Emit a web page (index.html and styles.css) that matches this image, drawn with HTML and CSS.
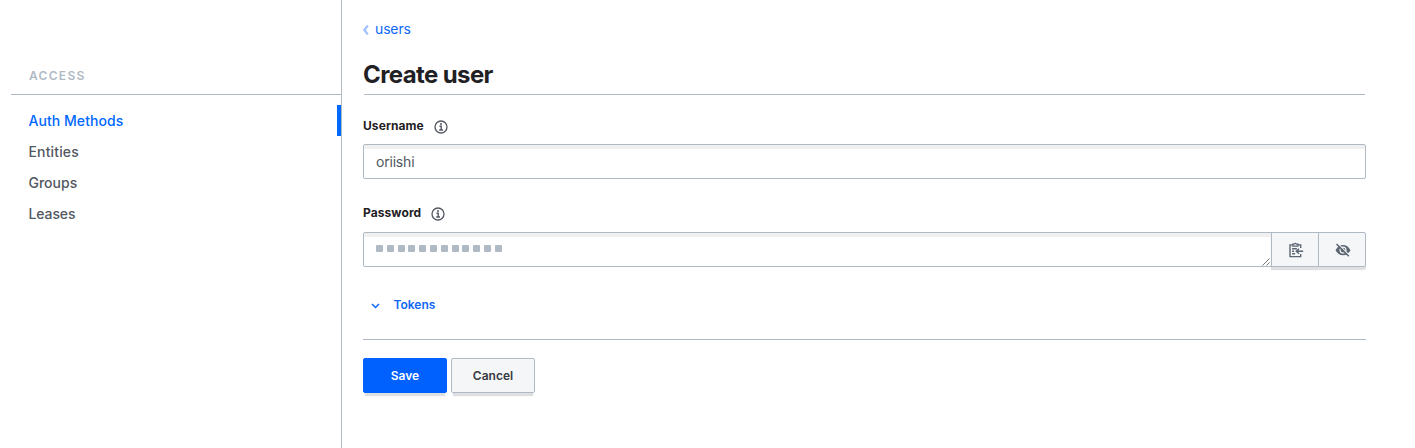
FILE: index.html
```html
<!DOCTYPE html>
<html lang="en">
<head>
<meta charset="utf-8">
<title>Create user</title>
<link rel="stylesheet" href="styles.css">
</head>
<body>
<div class="app">
  <aside class="sidebar">
    <h2 class="menu-label">ACCESS</h2>
    <nav class="menu">
      <a class="menu-item active">Auth Methods</a>
      <a class="menu-item entities">Entities</a>
      <a class="menu-item">Groups</a>
      <a class="menu-item leases">Leases</a>
    </nav>
  </aside>
  <main class="main">
    <a class="crumb"><svg width="7" height="10" viewBox="0 0 7 10"><path d="M5.8 0.6 L2.4 5 L5.8 9.4" fill="none" stroke="#a5c4ff" stroke-width="2.4"/></svg><span>users</span></a>
    <h1 class="title"><span>Create user</span></h1>
    <div class="label"><span>Username</span>
      <svg width="14" height="14" viewBox="0 0 14 14"><circle cx="7" cy="7" r="6" fill="none" stroke="#525761" stroke-width="1.3"/><path d="M5.5 6.3H7.2V10M5.2 10H9" fill="none" stroke="#525761" stroke-width="1.4"/><circle cx="7" cy="4" r="1" fill="#525761"/></svg>
    </div>
    <div class="input name"><span>oriishi</span></div>
    <div class="label second"><span>Password</span>
      <svg width="14" height="14" viewBox="0 0 14 14"><circle cx="7" cy="7" r="6" fill="none" stroke="#525761" stroke-width="1.3"/><path d="M5.5 6.3H7.2V10M5.2 10H9" fill="none" stroke="#525761" stroke-width="1.4"/><circle cx="7" cy="4" r="1" fill="#525761"/></svg>
    </div>
    <div class="masked">
      <div class="input secret">
        <i></i><i></i><i></i><i></i><i></i><i></i><i></i><i></i><i></i><i></i><i></i><i></i>
        <svg class="grip" width="8" height="8" viewBox="0 0 8 8"><path d="M0.5 7.5L7.5 0.5M4.5 7.5L7.5 4.5" stroke="#555" stroke-width="0.8" fill="none"/></svg>
      </div>
      <button class="tool" aria-label="Copy">
        <svg width="16" height="16" viewBox="0 0 16 16" fill="none" stroke="#5c6673" stroke-width="1.4"><path d="M12.7 6V2.9H2V14.6H12.7V12"/><path d="M4.7 4.2V2.2H6.1Q7.3 0.4 8.5 2.2H10V4.2Z" fill="#f5f6f8" stroke-width="1.2"/><path d="M4.1 6.7H8.9M4.1 9.2H6.1M4.1 11.7H7.1"/><path d="M15.2 9.3H8.7M11 6.8L8.3 9.3L11 11.8"/></svg>
      </button>
      <button class="tool last" aria-label="Show">
        <svg width="16" height="16" viewBox="0 0 16 16"><path d="M0.5 8.2Q3.2 3 8 3Q12.8 3 15.5 8.2Q12.8 13.3 8 13.3Q3.2 13.3 0.5 8.2Z" fill="#5c6673"/><circle cx="8" cy="8.1" r="3" fill="none" stroke="#f5f6f8" stroke-width="1.1"/><path d="M2.5 1.3L14.6 13.4" stroke="#f5f6f8" stroke-width="1.2"/><path d="M1.5 2L13.8 14.3" stroke="#5c6673" stroke-width="1.5"/></svg>
      </button>
    </div>
    <div class="toggle"><svg width="9" height="6" viewBox="0 0 9 6"><path d="M1 1L4.5 4.5L8 1" fill="none" stroke="#1068f5" stroke-width="1.5"/></svg><span>Tokens</span></div>
    <div class="actions">
      <button class="btn primary">Save</button>
      <button class="btn">Cancel</button>
    </div>
  </main>
</div>
</body>
</html>
```
FILE: styles.css
```css
* { box-sizing: border-box; }
body { margin: 0; background: #fff; font-family: Inter, "Liberation Sans", sans-serif; color: #1f2124; }
svg { display: block; flex: none; }
.app { display: flex; height: 448px; }
.sidebar { width: 342px; flex: none; padding-left: 11px; border-right: 1px solid #b0bac5; }
.menu-label { margin: 0; height: 95px; padding: 67px 0 0 18px; border-bottom: 1px solid #b0bac5; font-size: 12px; line-height: 18px; font-weight: 600; letter-spacing: 1.3px; color: #b0bac5; }
.menu { padding-top: 10px; }
.menu-item { display: block; height: 31px; line-height: 32px; padding-left: 17.5px; font-size: 14px; font-weight: 500; color: #525761; }
.menu-item.active { color: #0068ff; border-right: 4px solid #0068ff; letter-spacing: 0.05px; }
.menu-item.entities { letter-spacing: 0.15px; }
.menu-item.leases { letter-spacing: -0.1px; }
.main { flex: 1; padding: 0 49px 0 21px; }
.crumb { display: flex; align-items: center; gap: 6px; height: 20px; margin-top: 18px; font-size: 14px; letter-spacing: -0.15px; color: #1068f5; }
.crumb svg { margin: 4px 0 0 -1px; }
.title { margin: 22px 1px 0; height: 35px; border-bottom: 1px solid #b0bac5; font-size: 24px; line-height: 30px; font-weight: 700; letter-spacing: -0.6px; }
.title span { margin-left: -1px; }
.label { display: flex; align-items: center; gap: 10px; height: 20px; margin-top: 20px; font-size: 12px; font-weight: 700; letter-spacing: 0.08px; }
.label svg { margin-top: 4px; }
.label.second { margin-top: 23px; }
.input { display: flex; align-items: center; height: 35px; padding: 0 12px; border: 1px solid #b0bac5; border-radius: 2px; box-shadow: inset 0 4px 0 #f0f0f1; font-size: 14px; letter-spacing: -0.2px; color: #525761; }
.name { margin-top: 9px; }
.masked { display: flex; margin-top: 10px; }
.secret { position: relative; flex: 1; gap: 3.8px; padding-bottom: 2px; border-radius: 2px 0 0 2px; }
.secret i { width: 7px; height: 7px; border-radius: 1px; background: #b0bac5; }
.grip { position: absolute; right: 1px; bottom: 0; }
.tool { display: flex; align-items: center; justify-content: center; width: 48px; height: 35px; margin-left: -1px; padding: 0 0 0 2px; background: #f5f6f8; border: 1px solid #b0bac5; box-shadow: 0 3px 1px #dedfe1; }
.tool.last { border-radius: 0 2px 2px 0; }
.toggle { display: flex; align-items: center; gap: 14px; height: 73px; padding: 2px 0 0 7.5px; border-bottom: 1px solid #b0bac5; font-size: 12px; font-weight: 600; color: #1068f5; }
.toggle svg { margin-top: 3px; }
.actions { display: flex; gap: 4px; margin-top: 18px; }
.btn { width: 84px; height: 35px; padding: 0; border: 1px solid #b0bac5; border-radius: 2px; background: #f5f6f8; font: 600 12px Inter, sans-serif; color: #373a42; box-shadow: 0 5px 1px -2px #dedfe1; }
.btn.primary { background: #0061ff; border-color: #0061ff; color: #fff; }
```
